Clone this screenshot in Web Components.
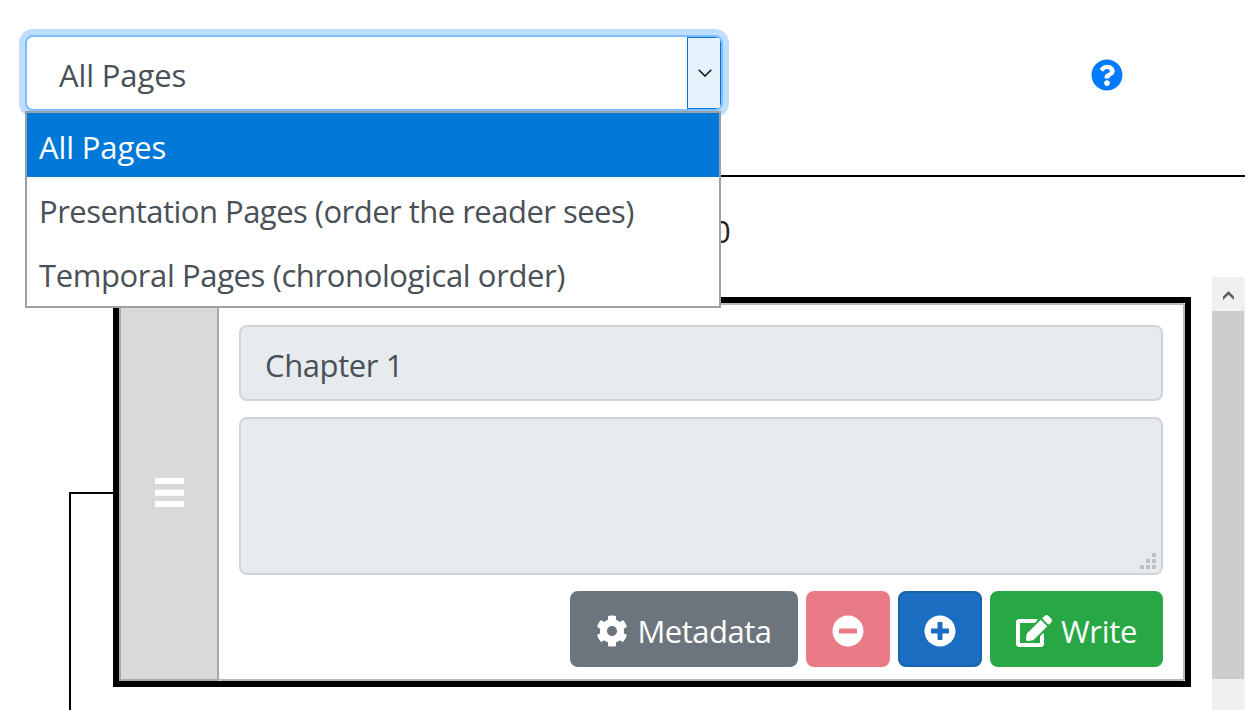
<!DOCTYPE html>
<html lang="en">
<head>
<meta charset="utf-8">
<title>Pages</title>
<style>
html,body{margin:0;height:100%;overflow:hidden;background:#fff}
body{font-family:"Segoe UI","Open Sans","Noto Sans",sans-serif;font-size:31px;color:#212529}
</style>
</head>
<body>
<page-app></page-app>
<script>
const ICONS = {
  help: ['0 0 512 512', 'M504 256c0 136.997-111.043 248-248 248S8 392.997 8 256C8 119.083 119.043 8 256 8s248 111.083 248 248zM262.655 90c-54.497 0-89.255 22.957-116.549 63.758-3.536 5.286-2.353 12.415 2.715 16.258l34.699 26.31c5.205 3.947 12.621 3.008 16.665-2.122 17.864-22.658 30.113-35.797 57.303-35.797 20.429 0 45.698 13.148 45.698 32.958 0 14.976-12.363 22.667-32.534 33.976C247.128 238.528 216 254.941 216 296v4c0 6.627 5.373 12 12 12h56c6.627 0 12-5.373 12-12v-1.333c0-28.462 83.186-29.647 83.186-106.667 0-58.002-60.165-102-116.531-102zM256 338c-25.365 0-46 20.635-46 46 0 25.364 20.635 46 46 46s46-20.636 46-46c0-25.365-20.635-46-46-46z'],
  cog: ['0 0 512 512', 'M487.4 315.7l-42.6-24.6c4.3-23.2 4.3-47 0-70.2l42.6-24.6c4.9-2.8 7.1-8.6 5.5-14-11.1-35.6-30-67.8-54.7-94.6-3.8-4.1-10-5.1-14.8-2.3L380.8 110c-17.9-15.4-38.5-27.3-60.8-35.1V25.8c0-5.6-3.9-10.5-9.4-11.7-36.7-8.2-74.3-7.8-109.2 0-5.5 1.2-9.4 6.1-9.4 11.7V75c-22.2 7.9-42.8 19.8-60.8 35.1L88.7 85.5c-4.9-2.8-11-1.9-14.8 2.3-24.7 26.7-43.6 58.9-54.7 94.6-1.7 5.4.6 11.2 5.5 14L67.3 221c-4.3 23.2-4.3 47 0 70.2l-42.6 24.6c-4.9 2.8-7.1 8.6-5.5 14 11.1 35.6 30 67.8 54.7 94.6 3.8 4.1 10 5.1 14.8 2.3l42.6-24.6c17.9 15.4 38.5 27.3 60.8 35.1v49.2c0 5.6 3.9 10.5 9.4 11.7 36.7 8.2 74.3 7.8 109.2 0 5.5-1.2 9.4-6.1 9.4-11.7v-49.2c22.2-7.9 42.8-19.8 60.8-35.1l42.6 24.6c4.9 2.8 11 1.9 14.8-2.3 24.7-26.7 43.6-58.9 54.7-94.6 1.5-5.5-.7-11.3-5.6-14.1zM256 336c-44.1 0-80-35.9-80-80s35.9-80 80-80 80 35.9 80 80-35.9 80-80 80z'],
  minus: ['0 0 512 512', 'M256 8C119 8 8 119 8 256s111 248 248 248 248-111 248-248S393 8 256 8zM124 296c-6.6 0-12-5.4-12-12v-56c0-6.6 5.4-12 12-12h264c6.6 0 12 5.4 12 12v56c0 6.6-5.4 12-12 12H124z'],
  plus: ['0 0 512 512', 'M256 8C119 8 8 119 8 256s111 248 248 248 248-111 248-248S393 8 256 8zm144 276c0 6.600-5.400 12-12 12h-92v92c0 6.600-5.400 12-12 12h-56c-6.600 0-12-5.400-12-12v-92h-92c-6.600 0-12-5.400-12-12v-56c0-6.600 5.400-12 12-12h92v-92c0-6.600 5.400-12 12-12h56c6.600 0 12 5.400 12 12v92h92c6.600 0 12 5.400 12 12v56z'],
  edit: ['0 0 576 512', 'M402.600 83.200l90.200 90.200c3.800 3.800 3.800 10 0 13.800L274.400 405.600l-92.800 10.300c-12.400 1.400-22.900-9.100-21.500-21.500l10.300-92.800L388.800 83.200c3.800-3.800 10-3.800 13.800 0zm162-22.900l-48.800-48.800c-15.200-15.200-39.900-15.200-55.200 0l-35.400 35.400c-3.800 3.800-3.800 10 0 13.800l90.200 90.200c3.800 3.800 10 3.800 13.800 0l35.400-35.400c15.200-15.300 15.200-40 0-55.200zM384 346.200V448H64V128h229.800c3.200 0 6.200-1.300 8.500-3.500l40-40c7.600-7.600 2.200-20.500-8.500-20.500H48C21.500 64 0 85.500 0 112v352c0 26.500 21.500 48 48 48h352c26.500 0 48-21.500 48-48V306.200c0-10.700-12.900-16-20.500-8.500l-40 40c-2.200 2.300-3.500 5.300-3.500 8.500z'],
  bars: ['0 0 29 29', 'M0 0h29v6H0zM0 11.700h29v6H0zM0 23h29v6H0z'],
  grip: ['0 0 16 16', 'M12 0h4v4h-4zM6 6h4v4H6zM12 6h4v4h-4zM0 12h4v4H0zM6 12h4v4H6zM12 12h4v4h-4z']
};

function define(name, html) {
  const template = document.createElement('template');
  template.innerHTML = html;
  customElements.define(name, class extends HTMLElement {
    constructor() {
      super();
      this.attachShadow({mode: 'open'}).append(template.content.cloneNode(true));
    }
  });
}

customElements.define('ui-icon', class extends HTMLElement {
  connectedCallback() {
    if (this.shadowRoot) return;
    const [box, d] = ICONS[this.getAttribute('name')];
    this.attachShadow({mode: 'open'}).innerHTML =
      `<style>:host{display:block;flex:none}svg{display:block;width:100%;height:100%}</style>
       <svg viewBox="${box}" fill="currentColor" aria-hidden="true"><path d="${d}"/></svg>`;
  }
});

define('ui-button', `
<style>
:host{display:flex;box-sizing:border-box;height:76px;border-radius:8px;align-items:center;justify-content:center;
  color:#fff;background:var(--bg);border:2px solid var(--edge,var(--bg));line-height:76px;white-space:nowrap}
.label{display:flex;align-items:center;gap:9px;height:76px;padding-top:4px}
</style>
<div class="label"><slot></slot></div>`);

define('select-option', `
<style>
:host{display:block;height:64px;line-height:66px;padding-left:12px;padding-top:1px;box-sizing:border-box;color:#495057;white-space:nowrap;overflow:hidden}
:host([selected]){background:#0078d7;color:#fff}
</style><slot></slot>`);

define('page-select', `
<style>
:host{display:block;position:relative;width:698px;height:76px;box-sizing:border-box;border:2px solid #80bdff;border-radius:8px;
  background:#fff;box-shadow:0 0 0 6px #bfdeff;color:#495057}
.field{display:flex;height:72px;border-radius:6px;overflow:hidden}
.value{flex:1;padding:1px 0 0 32px;line-height:74px}
.arrow{width:34px;box-sizing:border-box;border:1px solid #0078d7;background:#e5f1fb;display:grid;place-items:center}
.arrow svg{display:block;margin-left:1px}
.menu{position:absolute;z-index:5;left:-2px;top:74px;width:696px;height:197px;box-sizing:border-box;border:2px solid #a0a0a0;background:#fff}
</style>
<div class="field"><div class="value"><slot name="value"></slot></div>
<div class="arrow"><svg width="14" height="8" viewBox="0 0 14 8" fill="none" stroke="#111" stroke-width="1.5"><path d="M.7.700 7 7 13.300.7"/></svg></div></div>
<div class="menu"><slot></slot></div>`);

define('scroll-bar', `
<style>
:host{display:block;width:33px;background:#f0f0f0}
.up{height:34px;display:grid;place-items:center}
.up svg{display:block;margin-top:3px}
.thumb{width:32px;height:368px;background:#cdcdcd}
</style>
<div class="up"><svg width="11" height="9" viewBox="0 0 11 9" fill="#606060"><path d="M5.500 0 11 5.500V9L5.500 3.800 0 9V5.500z"/></svg></div>
<div class="thumb"></div>`);

define('chapter-card', `
<style>
:host{display:flex;box-sizing:border-box;width:1078px;height:390px;border:6px solid #000;background:#fff}
.handle{width:100px;box-sizing:border-box;border:2px solid #a9a9a9;background:#d9d9d9;color:#fff;display:grid;place-items:center}
.handle ui-icon{width:29px;height:29px;margin-top:1px}
.body{flex:1;box-sizing:border-box;border:2px solid #b8b8b8;border-left:0;border-radius:3px;padding:20px 20px 0;display:flex;flex-direction:column;gap:16px}
.title,.notes{box-sizing:border-box;border:2px solid #ced4da;border-radius:8px;background:#e8ebee;color:#495057}
.title{height:76px;padding:1px 0 0 24px;line-height:74px}
.notes{height:158px;display:flex;align-items:flex-end;justify-content:flex-end;padding:0 5px 4px 0}
.notes ui-icon{width:16px;height:16px;color:#bfc1c3}
.actions{display:flex;justify-content:flex-end;gap:8px}
</style>
<div class="handle"><ui-icon name="bars"></ui-icon></div>
<div class="body">
  <div class="title"><slot name="title"></slot></div>
  <div class="notes"><ui-icon name="grip"></ui-icon></div>
  <div class="actions"><slot name="actions"></slot></div>
</div>`);

define('page-app', `
<style>
:host{display:block;width:1260px;height:710px;overflow:hidden;background:#fff}
header{display:flex;height:177px;width:1245px;box-sizing:border-box;border-bottom:2px solid #000;border-image:linear-gradient(90deg,transparent 30px,#000 30px) 2;padding:35px 122px 0 25px;justify-content:space-between}
.help{width:32px;height:32px;margin-top:24px;color:#007bff}
.count{height:100px;box-sizing:border-box;padding:32px 0 0 713px;line-height:44px}
main{display:flex;height:433px;width:1245px}
.link{width:44px;margin:215px 0 0 69px;border:2px solid #000;border-width:2px 0 0 2px;box-sizing:border-box}
chapter-card{margin-top:20px}
scroll-bar{margin-left:21px}
.i{width:32px;height:32px}
.w{width:36px;height:32px}
.t1{letter-spacing:-.12px}
.t2{letter-spacing:-.52px}
.t3{letter-spacing:-.39px}
.t4{letter-spacing:-.4px}
.t5{letter-spacing:-.5px}
.t6{letter-spacing:-.3px}
</style>
<header>
  <page-select>
    <span slot="value" class="t1">All Pages</span>
    <select-option selected><span class="t1">All Pages</span></select-option>
    <select-option><span class="t2">Presentation Pages (order the reader sees)</span></select-option>
    <select-option><span class="t3">Temporal Pages (chronological order)</span></select-option>
  </page-select>
  <ui-icon class="help" name="help"></ui-icon>
</header>
<div class="count">0</div>
<main>
  <div class="link"></div>
  <chapter-card>
    <span slot="title" class="t4">Chapter 1</span>
    <ui-button slot="actions" style="--bg:#6c757d;width:228px"><ui-icon class="i" name="cog"></ui-icon><span class="t5">Metadata</span></ui-button>
    <ui-button slot="actions" style="--bg:#e97b86;width:84px"><ui-icon class="i" name="minus"></ui-icon></ui-button>
    <ui-button slot="actions" style="--bg:#1b6ec2;--edge:#1861ac;width:84px"><ui-icon class="i" name="plus"></ui-icon></ui-button>
    <ui-button slot="actions" style="--bg:#28a745;width:173px"><ui-icon class="w" name="edit"></ui-icon><span class="t6">Write</span></ui-button>
  </chapter-card>
  <scroll-bar></scroll-bar>
</main>`);
</script>
</body>
</html>
